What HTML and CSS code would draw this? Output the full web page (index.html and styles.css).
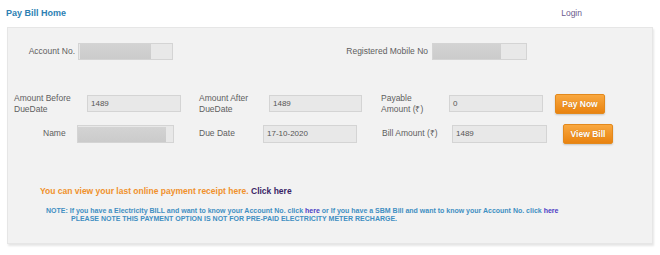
FILE: index.html
```html
<!DOCTYPE html>
<html>
<head>
<meta charset="utf-8">
<link rel="stylesheet" href="styles.css">
</head>
<body>
<div class="header">
  <span class="title">Pay Bill Home</span>
  <span class="login">Login</span>
</div>
<div class="panel">
  <div class="row r1">
    <div class="lbl l-acc">Account No.</div>
    <div class="field f-acc"><span class="blur b-acc"></span></div>
    <div class="lbl l-mob">Registered Mobile No</div>
    <div class="field f-mob"><span class="blur b-mob"></span></div>
  </div>
  <div class="row r2">
    <div class="lbl l-before">Amount Before<br>DueDate</div>
    <div class="field f-before">1489</div>
    <div class="lbl l-after">Amount After<br>DueDate</div>
    <div class="field f-after">1489</div>
    <div class="lbl l-pay">Payable<br>Amount (₹)</div>
    <div class="field f-pay">0</div>
    <div class="btn b-pay">Pay Now</div>
  </div>
  <div class="row r3">
    <div class="lbl l-name">Name</div>
    <div class="field f-name"><span class="blur b-name"></span></div>
    <div class="lbl l-due">Due Date</div>
    <div class="field f-due">17-10-2020</div>
    <div class="lbl l-bill">Bill Amount (₹)</div>
    <div class="field f-bill">1489</div>
    <div class="btn b-view">View Bill</div>
  </div>
  <div class="receipt">You can view your last online payment receipt here. <span class="click">Click here</span></div>
  <div class="note">
    <div class="n1">NOTE: If you have a Electricity BILL and want to know your Account No. click <span class="here">here</span> or If you have a SBM Bill and want to know your Account No. click <span class="here">here</span></div>
    <div class="n2">PLEASE NOTE THIS PAYMENT OPTION IS NOT FOR PRE-PAID ELECTRICITY METER RECHARGE.</div>
  </div>
</div>
</body>
</html>
```
FILE: styles.css
```css
* { box-sizing: border-box; }
html, body { margin: 0; padding: 0; background: #ffffff; }
body {
  font-family: "Liberation Sans", Arial, sans-serif;
  width: 660px;
  height: 255px;
  overflow: hidden;
}
.header {
  display: flex;
  align-items: center;
  height: 27px;
  padding: 0 0 1px 6px;
}
.title {
  font-size: 9px;
  font-weight: bold;
  color: #2d7fb3;
}
.login {
  margin-left: auto;
  margin-right: 78px;
  font-size: 8.5px;
  color: #6b5b8e;
}
.panel {
  margin-left: 7px;
  width: 646px;
  height: 217px;
  background: #f2f2f2;
  border: 1px solid #e6e6e6;
  box-shadow: 1px 2px 2px rgba(0,0,0,0.10);
}
.row {
  display: flex;
  align-items: center;
}
.r1 { margin-top: 15px; height: 17px; }
.r2 { margin-top: 31px; height: 25px; }
.r3 { margin-top: 8px; height: 19px; }
.lbl {
  font-size: 8.5px;
  line-height: 11px;
  color: #5e5e5e;
}
.field {
  height: 17px;
  background: #e8e8e8;
  border: 1px solid #d4d4d4;
  font-size: 8px;
  line-height: 15px;
  color: #555555;
  padding-left: 3px;
  position: relative;
  overflow: hidden;
}
.blur {
  position: absolute;
  top: 0;
  bottom: 0;
  background: linear-gradient(#d3d3d3, #cbcbcb);
}
.l-acc { margin-left: 6px; width: 62px; text-align: right; padding-right: 1px; }
.f-acc { margin-left: 2px; width: 95px; }
.b-acc { left: 1px; width: 71px; }
.l-mob { width: 255px; text-align: right; }
.f-mob { margin-left: 4px; width: 95px; }
.b-mob { left: 0; width: 68px; }

.l-before { margin-left: 6px; width: 73px; }
.f-before { width: 94px; }
.l-after { margin-left: 18px; width: 70px; }
.f-after { width: 93px; }
.l-pay { margin-left: 19px; width: 68px; }
.f-pay { width: 94px; }
.btn {
  width: 50px;
  height: 20px;
  border-radius: 2px;
  border: 1px solid #e3891c;
  background: linear-gradient(#f9a840, #e98310);
  box-shadow: 0 1px 2px rgba(0,0,0,0.18);
  color: #ffffff;
  font-size: 8.5px;
  font-weight: bold;
  line-height: 18px;
  text-align: center;
  text-shadow: 0 0 1px rgba(160,80,0,0.5);
}
.b-pay { margin-left: 12px; }

.l-name { margin-left: 6px; width: 63px; padding-left: 29px; }
.f-name { width: 97px; height: 18px; }
.b-name { left: 0; width: 88px; top: 1px; }
.l-due { margin-left: 25px; width: 64px; }
.f-due { width: 94px; height: 18px; }
.l-bill { margin-left: 25px; width: 70px; }
.f-bill { width: 95px; height: 18px; }
.b-view { margin-left: 16px; }

.receipt {
  margin-top: 43px;
  margin-left: 32px;
  font-size: 8.5px;
  line-height: 11px;
  font-weight: bold;
  color: #f0912c;
}
.click { color: #3a1f66; }
.note {
  margin-top: 10px;
  font-size: 7px;
  line-height: 8px;
  font-weight: bold;
  color: #3f8fc2;
}
.n1 { margin-left: 38px; }
.n2 { margin-left: 63px; }
.here { color: #4b3cc4; }
```
